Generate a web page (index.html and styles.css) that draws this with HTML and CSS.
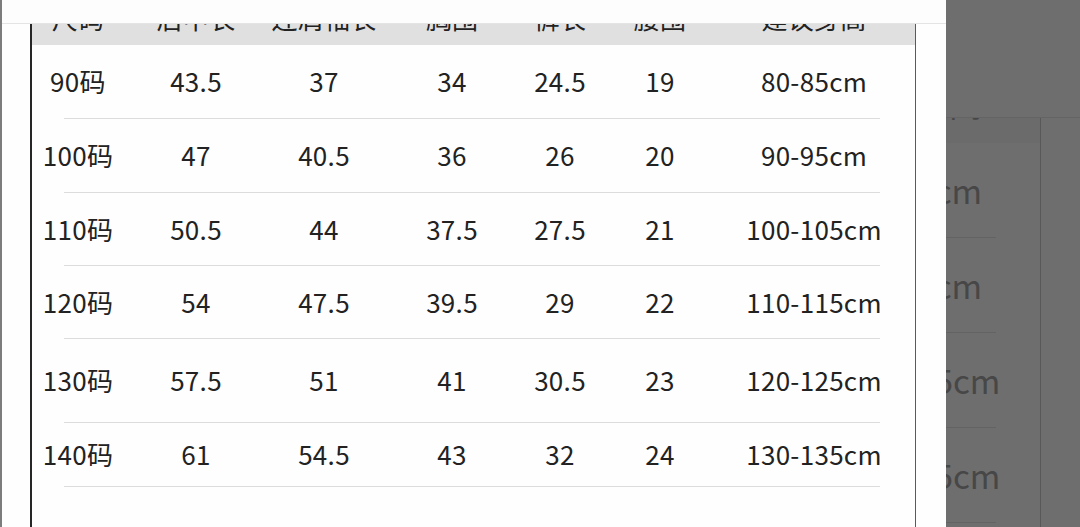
FILE: index.html
```html
<!DOCTYPE html>
<html lang="zh-CN">
<head>
<meta charset="utf-8">
<title>尺码表</title>
<link rel="stylesheet" href="styles.css">
</head>
<body>
<div class="page">
  <div class="edge"></div>
  <div class="sheet">
    <div class="chart">
      <div class="row head">
        <span>尺码</span><span>后中长</span><span>连肩袖长</span><span>胸围</span><span>裤长</span><span>腰围</span><span>建议身高</span>
      </div>
      <div class="row"><span>90码</span><span>43.5</span><span>37</span><span>34</span><span>24.5</span><span>19</span><span>80-85cm</span></div>
      <div class="row"><span>100码</span><span>47</span><span>40.5</span><span>36</span><span>26</span><span>20</span><span>90-95cm</span></div>
      <div class="row"><span>110码</span><span>50.5</span><span>44</span><span>37.5</span><span>27.5</span><span>21</span><span>100-105cm</span></div>
      <div class="row"><span>120码</span><span>54</span><span>47.5</span><span>39.5</span><span>29</span><span>22</span><span>110-115cm</span></div>
      <div class="row"><span>130码</span><span>57.5</span><span>51</span><span>41</span><span>30.5</span><span>23</span><span>120-125cm</span></div>
      <div class="row"><span>140码</span><span>61</span><span>54.5</span><span>43</span><span>32</span><span>24</span><span>130-135cm</span></div>
    </div>
    <div class="topbar"></div>
  </div>
  <div class="dim">
    <div class="ghost-top"></div>
    <div class="ghost">
      <div class="g-head"><span class="g-head-text">建议身高</span></div>
      <div class="g-row">80-85cm</div>
      <div class="g-row">90-95cm</div>
      <div class="g-row">100-105cm</div>
      <div class="g-row">110-115cm</div>
      <div class="g-row">120-125cm</div>
    </div>
  </div>
</div>
</body>
</html>
```

FILE: styles.css
```css
html, body {
  margin: 0;
  padding: 0;
}
body {
  width: 1080px;
  height: 527px;
  overflow: hidden;
  background: #fdfdfd;
  font-family: "Noto Sans CJK SC", "Noto Sans", sans-serif;
  color: #222;
}
.page {
  display: flex;
  height: 527px;
}
.edge {
  width: 2px;
  background: #7c7c7c;
  flex: none;
}
.sheet {
  position: relative;
  width: 944px;
  flex: none;
  background: #fefefe;
  padding-left: 28px;
  box-sizing: border-box;
  overflow: hidden;
}
.chart {
  width: 886px;
  height: 527px;
  border-left: 2px solid #262626;
  border-right: 1px solid #5a5a5a;
  box-sizing: border-box;
}
.row {
  display: grid;
  grid-template-columns: 92px 144px 112px 144px 72px 128px 180px;
  align-items: center;
  padding-bottom: 2px;
  box-sizing: border-box;
  font-size: 26px;
  line-height: 26px;
  letter-spacing: 0.3px;
  background-image: linear-gradient(#dcdcdc, #dcdcdc);
  background-repeat: no-repeat;
  background-size: 816px 1px;
  background-position: 32px 100%;
}
.row span {
  text-align: center;
  white-space: nowrap;
}
.row.head {
  height: 45px;
  align-items: start;
  padding-top: 5px;
  padding-bottom: 0;
  background: #e0e0e0;
}
.row:nth-child(2),
.row:nth-child(3) { height: 74px; }
.row:nth-child(4),
.row:nth-child(5) { height: 73px; }
.row:nth-child(6) { height: 84px; }
.row:nth-child(7) { height: 64px; }

.topbar {
  position: absolute;
  top: 0;
  left: 0;
  right: 0;
  height: 24px;
  background: #fdfdfd;
  border-bottom: 1px solid #e4e4e4;
  box-sizing: border-box;
}

.dim {
  flex: 1;
  background: #6e6e6e;
  overflow: hidden;
  display: flex;
  flex-direction: column;
}
.ghost-top {
  height: 118px;
  flex: none;
  border-bottom: 1px solid #646464;
  box-sizing: border-box;
}
.ghost {
  margin-left: -154px;
  width: 248px;
  border-right: 1px solid #585858;
  flex: none;
  font-size: 33px;
  line-height: 33px;
  color: #474747;
  text-align: center;
}
.g-head {
  height: 25px;
  background: #6b6b6b;
  overflow: hidden;
  clip-path: inset(0);
  display: flex;
  align-items: flex-end;
  justify-content: center;
}
.g-head-text {
  margin-bottom: 23px;
  white-space: nowrap;
}
.g-row {
  height: 95px;
  display: flex;
  align-items: center;
  justify-content: center;
  white-space: nowrap;
  background-image: linear-gradient(#636363, #636363);
  background-repeat: no-repeat;
  background-size: 100% 1px;
  background-position: -44px 100%;
}
```
